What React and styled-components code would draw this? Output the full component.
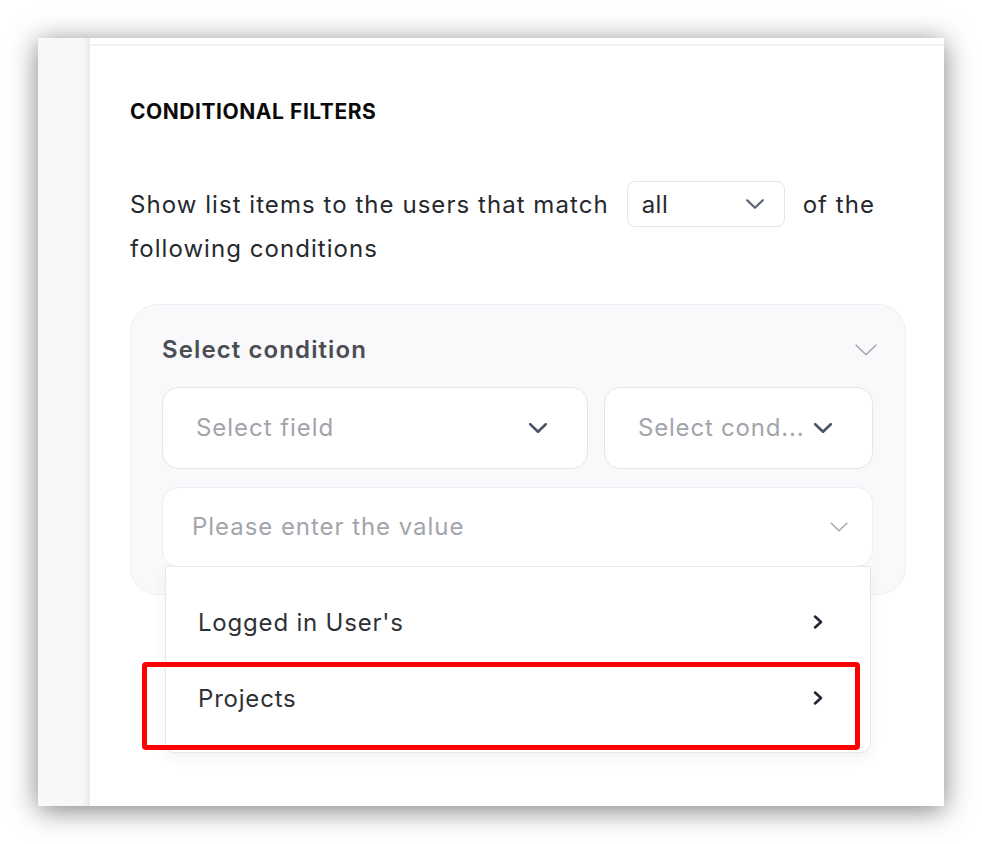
import React from "react";
import styled, { createGlobalStyle } from "styled-components";

const Global = createGlobalStyle`
  html, body { margin: 0; padding: 0; background: #ffffff; }
  body { font-family: Inter, "Noto Sans", sans-serif; -webkit-font-smoothing: antialiased; }
  * { box-sizing: border-box; }
`;

const Stage = styled.div`
  width: 982px;
  height: 844px;
  padding: 38px 38px 38px 38px;
  background: #ffffff;
`;

const Window = styled.div`
  display: flex;
  width: 906px;
  height: 768px;
  background: #ffffff;
  box-shadow: 0 4px 26px rgba(0, 0, 0, 0.5);
`;

const Sidebar = styled.div`
  width: 52px;
  flex: none;
  background: #f8f8fa;
  border-right: 1px solid #ececef;
  box-shadow: inset -6px 0 6px -4px rgba(0, 0, 0, 0.07);
`;

const Main = styled.div`
  flex: 1;
  display: flex;
  flex-direction: column;
`;

const TopStrip = styled.div`
  height: 8px;
  flex: none;
  border-bottom: 2px solid #eff0f2;
`;

const Content = styled.div`
  padding: 53px 38px 0 40px;
  position: relative;
`;

const Heading = styled.h2`
  margin: 0;
  font-size: 21px;
  line-height: 26px;
  font-weight: 700;
  color: #0a0a0a;
  letter-spacing: 0.55px;
`;

const Sentence = styled.p`
  margin: 56px 0 0;
  font-size: 24px;
  line-height: 44px;
  color: #26292e;
  letter-spacing: 1.05px;
`;

const MatchSelect = styled.span`
  display: inline-flex;
  align-items: center;
  justify-content: space-between;
  vertical-align: baseline;
  width: 158px;
  height: 46px;
  margin: 0 18px;
  padding: 0 20px 0 14px;
  border: 1.5px solid #e3e5e9;
  border-radius: 8px;
  background: #fff;
  line-height: 29px;
  color: #26292e;
  letter-spacing: 0.5px;
`;

const Card = styled.div`
  margin-top: 33px;
  background: #f9f9fb;
  border: 1px solid #eeeff2;
  border-radius: 28px;
  padding: 30px 32px 27px 31px;
  display: flex;
  flex-direction: column;
`;

const CardHeader = styled.div`
  display: flex;
  align-items: center;
  justify-content: space-between;
  height: 30px;
  margin-right: -4px;
`;

const CardTitle = styled.span`
  font-size: 24px;
  line-height: 30px;
  font-weight: 600;
  color: #4a4d54;
  letter-spacing: 1.1px;
`;

const Row = styled.div`
  display: flex;
  gap: 16px;
  margin-top: 22px;
`;

const SelectBox = styled.div`
  display: flex;
  align-items: center;
  justify-content: space-between;
  height: 82px;
  padding: 0 40px 0 33px;
  background: #ffffff;
  border: 1.5px solid #e3e5e9;
  border-radius: 16px;
  ${(p) => (p.$grow ? "flex: 1;" : `width: ${p.$width}px; flex: none;`)}
`;

const Placeholder = styled.span`
  font-size: 24px;
  line-height: 30px;
  color: #a2a5ab;
  white-space: nowrap;
  letter-spacing: ${(p) => p.$ls || "0.95px"};
`;

const ValueWrap = styled.div`
  position: relative;
  margin-top: 18px;
`;

const ValueBox = styled.div`
  display: flex;
  align-items: center;
  justify-content: space-between;
  height: 80px;
  padding: 0 24px 0 29px;
  background: #ffffff;
  border: 1.5px solid #eceef1;
  border-radius: 16px;
`;

const Dropdown = styled.div`
  position: absolute;
  top: 79px;
  left: 3px;
  right: 2px;
  padding: 17px 0 16px;
  background: #ffffff;
  border: 1.5px solid #e6e7eb;
  border-radius: 0 0 10px 10px;
  box-shadow: 0 6px 14px rgba(0, 0, 0, 0.05);
  z-index: 2;
`;

const Option = styled.div`
  display: flex;
  align-items: center;
  justify-content: space-between;
  height: 76px;
  padding: 0 47px 0 32px;
  font-size: 24px;
  color: #2e3136;
  letter-spacing: 0.8px;
`;

const Highlight = styled.div`
  position: absolute;
  left: -24px;
  top: 95px;
  width: 718px;
  height: 88px;
  border: 5px solid #ff0000;
  border-radius: 4px;
  pointer-events: none;
  z-index: 3;
`;

const Chevron = ({ w = 18, h = 10, color, stroke = 2.4 }) => (
  <svg width={w} height={h} viewBox={`0 0 ${w} ${h}`} fill="none" style={{ flex: "none", display: "block" }}>
    <polyline
      points={`1.2,1.2 ${w / 2},${h - 1.2} ${w - 1.2},1.2`}
      stroke={color}
      strokeWidth={stroke}
      strokeLinecap="round"
      strokeLinejoin="round"
    />
  </svg>
);

const ChevronRight = ({ color = "#1f2633" }) => (
  <svg width="10" height="14" viewBox="0 0 10 14" fill="none" style={{ flex: "none", display: "block" }}>
    <polyline points="2,1.5 8,7 2,12.5" stroke={color} strokeWidth="2.5" strokeLinecap="round" strokeLinejoin="round" />
  </svg>
);

export default function App() {
  return (
    <>
      <Global />
      <Stage>
        <Window>
          <Sidebar />
          <Main>
            <TopStrip />
            <Content>
              <Heading>CONDITIONAL FILTERS</Heading>
              <Sentence>
                <span>Show list items to the users that match</span>
                <MatchSelect>
                  <span>all</span>
                  <Chevron w={18} h={10} color="#5b6473" stroke={2.2} />
                </MatchSelect>
                <span>of the following conditions</span>
              </Sentence>
              <Card>
                <CardHeader>
                  <CardTitle>Select condition</CardTitle>
                  <Chevron w={22} h={12} color="#a4a7ad" stroke={1.6} />
                </CardHeader>
                <Row>
                  <SelectBox $grow>
                    <Placeholder>Select field</Placeholder>
                    <Chevron w={18} h={10} color="#4b5565" stroke={2.6} />
                  </SelectBox>
                  <SelectBox $width={269}>
                    <Placeholder $ls="0.8px">Select cond...</Placeholder>
                    <Chevron w={18} h={10} color="#4b5565" stroke={2.6} />
                  </SelectBox>
                </Row>
                <ValueWrap>
                  <ValueBox>
                    <Placeholder>Please enter the value</Placeholder>
                    <Chevron w={18} h={10} color="#a9acb2" stroke={1.6} />
                  </ValueBox>
                  <Dropdown>
                    <Option>
                      <span>Logged in User's</span>
                      <ChevronRight />
                    </Option>
                    <Option>
                      <span>Projects</span>
                      <ChevronRight />
                    </Option>
                    <Highlight />
                  </Dropdown>
                </ValueWrap>
              </Card>
            </Content>
          </Main>
        </Window>
      </Stage>
    </>
  );
}
